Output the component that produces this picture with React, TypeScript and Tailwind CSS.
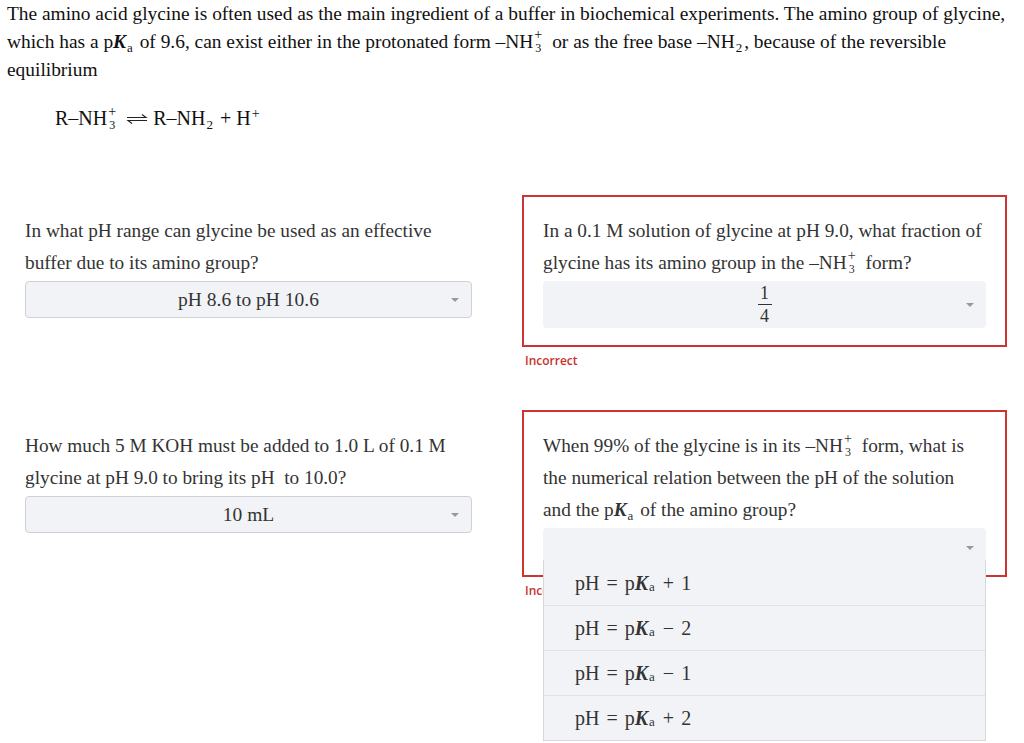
import React from 'react';

const serif = "font-['Liberation_Serif','Times_New_Roman',serif]";

// stacked charge over count, e.g. NH₃⁺ — kept out of the line box height
const Ion = ({ sup, sub }: { sup: string; sub: string }) => (
  <span className="relative inline-block w-[9px] h-[10px] ml-[1px] mr-[4px]">
    <span className="absolute left-0 -top-[10px] text-[14px] leading-none">{sup}</span>
    <span className="absolute left-[1px] top-[4px] text-[12px] leading-none">{sub}</span>
  </span>
);

const Sub = ({ children }: { children: React.ReactNode }) => (
  <span className="relative top-[0.3em] text-[13px] leading-none ml-[1px] mr-[2px]">{children}</span>
);

const PKa = () => (
  <span>
    p<span className="italic font-bold">K</span>
    <Sub>a</Sub>
  </span>
);

const Caret = () => (
  <span className="absolute right-[12px] top-1/2 -translate-y-1/2 w-0 h-0 border-l-[4px] border-r-[4px] border-t-[4px] border-l-transparent border-r-transparent border-t-[#999]" />
);

const Equilibrium = () => (
  <svg width="24" height="12" viewBox="0 0 24 12" className="inline-block mx-[4px] align-[0px]">
    <path d="M2 4.5 H21 L17 1.5" fill="none" stroke="#222" strokeWidth="1.1" />
    <path d="M22 7.5 H3 L7 10.5" fill="none" stroke="#222" strokeWidth="1.1" />
  </svg>
);

const Select = ({ children, bordered = true, tall = false }: { children?: React.ReactNode; bordered?: boolean; tall?: boolean }) => (
  <div
    className={`relative mt-[2px] flex items-center justify-center rounded-[4px] bg-[#f2f3f6] text-[19.5px] leading-[24px] text-[#333] ${
      bordered ? 'border border-[#cfd1d6] h-[37px]' : tall ? 'h-[47px]' : 'h-[39px]'
    }`}
  >
    {children}
    <Caret />
  </div>
);

const Fraction = ({ top, bottom }: { top: string; bottom: string }) => (
  <span className="inline-flex flex-col items-center text-[18px] leading-[20px]">
    <span className="px-[2px]">{top}</span>
    <span className="w-[14px] h-px bg-[#333] my-[1px]" />
    <span className="px-[2px]">{bottom}</span>
  </span>
);

const Incorrect = ({ children = 'Incorrect' }: { children?: string }) => (
  <div className="font-['Open_Sans',sans-serif] text-[12px] leading-[18px] font-semibold text-[#c9302c] mt-[5px] ml-[3px]">
    {children}
  </div>
);

const options = ['+', '−', '−', '+'];
const values = ['1', '2', '1', '2'];

export default function App() {
  return (
    <div className={`${serif} bg-white w-[1024px] min-h-[743px] overflow-hidden`}>
      <p className="w-[1014px] pl-[7px] text-[19.4px] leading-[28px] text-[#111]">
        The amino acid glycine is often used as the main ingredient of a buffer in biochemical experiments. The amino
        group of glycine, which has a <PKa /> of 9.6, can exist either in the protonated form –NH
        <Ion sup="+" sub="3" /> or as the free base –NH<Sub>2</Sub>, because of the reversible equilibrium
      </p>

      <div className="mt-[20px] pl-[55px] text-[20px] leading-[28px] text-[#111]">
        R–NH<Ion sup="+" sub="3" />
        <Equilibrium />
        R–NH<Sub>2</Sub> + H<span className="relative -top-[0.5em] text-[14px] leading-none ml-[1px]">+</span>
      </div>

      <div className="mt-[63px] pl-[4px] grid grid-cols-[489px_485px] gap-x-[29px] text-[19.3px] leading-[32px] text-[#333]">
        {/* row 1 */}
        <div className="border-2 border-transparent px-[19px] pt-[18px]">
          <div>In what pH range can glycine be used as an effective buffer due to its amino group?</div>
          <Select>pH 8.6 to pH 10.6</Select>
        </div>
        <div>
          <div className="border-2 border-[#cc3333] px-[19px] pt-[18px] pb-[17px]">
            <div>
              In a 0.1 M solution of glycine at pH 9.0, what fraction of glycine has its amino group in the –NH
              <Ion sup="+" sub="3" /> form?
            </div>
            <Select bordered={false} tall>
              <Fraction top="1" bottom="4" />
            </Select>
          </div>
          <Incorrect />
        </div>

        {/* row 2 */}
        <div className="mt-[40px] border-2 border-transparent px-[19px] pt-[18px]">
          <div>How much 5 M KOH must be added to 1.0 L of 0.1 M glycine at pH 9.0 to bring its pH&nbsp; to 10.0?</div>
          <Select>10 mL</Select>
        </div>
        <div className="mt-[40px]">
          <div className="border-2 border-[#cc3333] px-[19px] pt-[18px] pb-[8px]">
            <div>
              When 99% of the glycine is in its –NH<Ion sup="+" sub="3" /> form, what is the numerical relation between
              the pH of the solution and the <PKa /> of the amino group?
            </div>
            <div className="relative">
              <Select bordered={false} />
              {/* open option list */}
              <ul className="absolute left-0 right-0 top-[32px] z-10 border-x border-b border-[#d6d7db] bg-[#f2f3f6] text-[20px] leading-[24px] text-[#333]">
                {options.map((op, i) => (
                  <li
                    key={i}
                    className={`h-[45px] flex items-center pl-[31px] ${i > 0 ? 'border-t border-[#e1e2e6]' : ''}`}
                  >
                    pH<span className="mx-[7px]">=</span>p<span className="italic font-bold">K</span>
                    <span className="relative top-[0.3em] text-[13px] leading-none ml-[1px] mr-[8px]">a</span>
                    {op}
                    <span className="ml-[7px]">{values[i]}</span>
                  </li>
                ))}
              </ul>
            </div>
          </div>
          <Incorrect />
        </div>
      </div>
    </div>
  );
}
